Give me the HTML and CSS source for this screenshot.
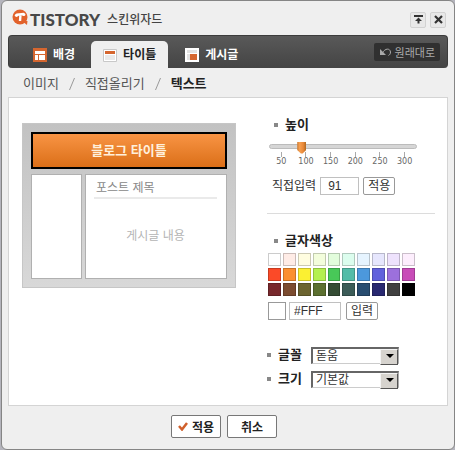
FILE: index.html
```html
<!DOCTYPE html>
<html lang="ko">
<head>
  <meta charset="UTF-8">
  <meta name="viewport" content="width=device-width, initial-scale=1.0">
  <title>TISTORY 스킨위자드</title>
  <link rel="stylesheet" href="styles.css">
</head>
<body>

  <div class="wizard">
    <header class="wizard-header">
      <h1 class="logo">
        <svg class="logo-mark" width="17" height="17" viewBox="0 0 17 17">
          <circle cx="8" cy="8" r="7.500" fill="#e2622b"/>
          <path d="M10 12h5.500l-.5 4z" fill="#e2622b"/>
          <path d="M4.500 5.800L12 5M8.500 5.500L8 12" stroke="#fff" stroke-width="2.400" fill="none"/>
          <circle cx="4.500" cy="6.300" r="1.600" fill="#fff"/>
          <circle cx="11.800" cy="5.500" r="1.600" fill="#fff"/>
        </svg>
        <span class="logo-name">TISTORY</span>
        <span class="logo-sub">스킨위자드</span>
      </h1>
      <div class="window-buttons">
        <button type="button" class="window-button" aria-label="접기">
          <svg width="9" height="9" viewBox="0 0 9 9"><path d="M0 1h9" stroke="#333" stroke-width="2"/><path d="M4.500 2.500L8 6H5.500v2.500h-2V6H1z" fill="#333"/></svg>
        </button>
        <button type="button" class="window-button" aria-label="닫기">
          <svg width="9" height="9" viewBox="0 0 9 9"><path d="M1 1l7 7M8 1L1 8" stroke="#333" stroke-width="2.200"/></svg>
        </button>
      </div>
    </header>

    <nav class="tabs">
      <a href="#background" class="tab">
        <svg width="14" height="14" viewBox="0 0 14 14"><path d="M0 0h14v14H0z" fill="#d5662f"/><path d="M2 3h10v3H2zM2 7h3v5H2zM6 7h6v5H6z" fill="#fff"/></svg>
        배경
      </a>
      <a href="#title" class="tab active">
        <svg width="14" height="14" viewBox="0 0 14 14"><path d="M.5 1.500h13v12H.5z" fill="#fff" stroke="#c8c8c8"/><path d="M2 3h10v3H2z" fill="#d5662f"/><path d="M2 7h10v5H2z" fill="#e9e9e9"/></svg>
        타이틀
      </a>
      <a href="#post" class="tab">
        <svg width="14" height="14" viewBox="0 0 14 14"><path d="M0 0h14v14H0z" fill="#fff"/><path d="M2 2h10v3H2zM2 6h3v6H2z" fill="#e2e2e2"/><path d="M5 6h7v6H5z" fill="#d5662f"/></svg>
        게시글
      </a>
      <button type="button" class="reset-button">
        <svg width="12" height="10" viewBox="0 0 12 10"><path d="M2.500 6C5 1 10 1 10.500 5c0 2-1 3-2 3.500" fill="none" stroke="#aaa"/><path d="M0 2v6h6z" fill="#aaa"/></svg>
        원래대로
      </button>
    </nav>

    <nav class="sub-menu">
      <a href="#image">이미지</a>
      <svg class="slash" width="6" height="12" viewBox="0 0 6 12"><path d="M5.500 0L.5 12" stroke="#999"/></svg>
      <a href="#upload">직접올리기</a>
      <svg class="slash" width="6" height="12" viewBox="0 0 6 12"><path d="M5.500 0L.5 12" stroke="#999"/></svg>
      <a href="#text" class="current">텍스트</a>
    </nav>

    <main class="panel">
      <section class="preview">
        <div class="preview-title">블로그 타이틀</div>
        <div class="preview-body">
          <div class="preview-side"></div>
          <div class="preview-post">
            <h2>포스트 제목</h2>
            <p>게시글 내용</p>
          </div>
        </div>
      </section>

      <form class="settings" id="textForm">
        <section class="height-setting">
          <h2 class="setting-name"><label for="heightRange">높이</label></h2>
          <div class="slider">
            <input type="range" id="heightRange" min="35" max="317" value="91">
            <ul class="ticks">
              <li>50</li>
              <li>100</li>
              <li>150</li>
              <li>200</li>
              <li>250</li>
              <li>300</li>
            </ul>
          </div>
          <div class="height-row">
            <label for="height">직접입력</label>
            <input type="text" id="height" class="text-box height-box" value="91">
            <button type="button" class="small-button">적용</button>
          </div>
        </section>

        <section class="color-setting">
          <h2 class="setting-name"><label for="color">글자색상</label></h2>
          <div class="palette" id="palette"></div>
          <div class="color-row">
            <span class="color-chip"></span>
            <input type="text" id="color" class="text-box color-box" value="#FFF">
            <button type="button" class="small-button">입력</button>
          </div>
        </section>

        <section class="font-setting">
          <div class="font-row">
            <label for="font" class="setting-name">글꼴</label>
            <div class="select-box">
              <select id="font">
                <option>돋움</option>
                <option>굴림</option>
              </select>
            </div>
          </div>
          <div class="font-row">
            <label for="size" class="setting-name">크기</label>
            <div class="select-box">
              <select id="size">
                <option>기본값</option>
                <option>크게</option>
              </select>
            </div>
          </div>
        </section>
      </form>
    </main>

    <footer class="wizard-footer">
      <button type="submit" form="textForm" class="main-button">
        <svg width="10" height="9" viewBox="0 0 10 9"><path d="M1 4l3 3.500L9 1" fill="none" stroke="#d0602c" stroke-width="2.500"/></svg>
        적용
      </button>
      <button type="button" class="main-button">취소</button>
    </footer>
  </div>

  <script>
    const colors = [
      "#ffffff", "#ffece6", "#fffde0", "#f3fddc", "#e2fddc", "#dcfdee", "#e6f4ff", "#e6e6fd", "#eee2fd", "#fdeefd",
      "#fb4a28", "#fb8f30", "#fbf032", "#b4f050", "#48c858", "#54bca8", "#4c98dc", "#6060dc", "#9c70dc", "#c84cb8",
      "#78282c", "#7c4c30", "#6c6430", "#5c7030", "#344c34", "#3c5c58", "#284c70", "#282870", "#404040", "#000000"
    ];
    const palette = document.getElementById("palette");
    const colorInput = document.getElementById("color");

    colors.forEach(function(color) {
      const button = document.createElement("button");
      button.type = "button";
      button.className = "swatch";
      button.style.backgroundColor = color;
      button.setAttribute("aria-label", color);
      button.addEventListener("click", function() {
        colorInput.value = color.toUpperCase();
        document.querySelector(".color-chip").style.backgroundColor = color;
      });
      palette.appendChild(button);
    });

    document.getElementById("heightRange").addEventListener("input", function() {
      document.getElementById("height").value = this.value;
    });

    document.getElementById("textForm").addEventListener("submit", function(event) {
      event.preventDefault();
    });
  </script>

</body>
</html>
```

FILE: styles.css
```css
/* General Styles */
* {
  margin: 0;
  padding: 0;
  box-sizing: border-box;
}

body {
  background-color: #b4b4bc;
  padding-left: 1px;
  font-family: "Liberation Sans", "Noto Sans CJK KR", sans-serif;
  font-size: 12px;
  line-height: 16px;
  color: #333;
}

button, input, select {
  font-family: inherit;
  font-size: 12px;
  color: #333;
}

a {
  color: inherit;
  text-decoration: none;
}

svg {
  flex: none;
}

.wizard {
  background-color: #efefef;
  border: 1px solid #858585;
  border-radius: 6px;
  padding: 0 6px 11px;
}

/* Header */
.wizard-header {
  display: flex;
  justify-content: space-between;
  align-items: center;
  height: 34px;
  padding: 3px 2px 0 4px;
}

.logo {
  display: flex;
  align-items: center;
}

.logo-mark {
  margin-bottom: 4px;
}

.logo-name {
  margin-left: 1px;
  font-family: Lato, sans-serif;
  font-size: 17px;
  font-weight: 900;
  color: #484848;
}

.logo-sub {
  margin-left: 7px;
  font-size: 12px;
  font-weight: 500;
  color: #444;
}

.window-buttons {
  display: flex;
  gap: 4px;
}

.window-button {
  display: flex;
  justify-content: center;
  align-items: center;
  width: 16px;
  height: 16px;
  background-color: #e8e8e8;
  border: 1px solid #d2d2d2;
  border-radius: 2px;
}

/* Tabs */
.tabs {
  display: flex;
  align-items: flex-end;
  height: 33px;
  padding: 0 7px 0 12px;
  background: linear-gradient(#595959, #444);
  border: 1px solid #3c3c3c;
  border-bottom: none;
  border-radius: 4px;
}

.tab {
  display: flex;
  align-items: center;
  gap: 6px;
  height: 27px;
  padding: 0 12px;
  font-weight: bold;
  color: #fff;
}

.tab.active {
  margin: 0 5px 0 4px;
  background-color: #efefef;
  border-radius: 5px 5px 0 0;
  color: #222;
}

.reset-button {
  display: flex;
  align-items: center;
  gap: 3px;
  height: 18px;
  margin-left: auto;
  margin-bottom: 7px;
  padding: 0 5px 0 6px;
  background-color: #303030;
  border: none;
  border-radius: 2px;
  font-size: 11px;
  color: #aaa;
}

.sub-menu {
  display: flex;
  align-items: center;
  gap: 10px;
  height: 29px;
  padding: 3px 15px 0;
  font-size: 13px;
  color: #555;
}

.current {
  font-weight: bold;
  color: #222;
}

/* Content */
.panel {
  display: flex;
  justify-content: space-between;
  align-items: flex-start;
  padding: 18px 12px 17px 13px;
  background-color: #fff;
  border: 1px solid #d4d4d4;
}

.preview {
  flex: 0 1 214px;
  margin-top: 7px;
  padding: 8px;
  background: linear-gradient(#c2c2c2, #d8d8d8);
  border: 1px solid #c6c6c6;
}

.preview-title {
  display: flex;
  justify-content: center;
  align-items: center;
  height: 37px;
  background: linear-gradient(#f89444, #db6f18);
  border: 2px solid #000;
  font-size: 13px;
  font-weight: bold;
  color: #fff0dc;
}

.preview-body {
  display: flex;
  gap: 3px;
  height: 105px;
  margin-top: 5px;
}

.preview-side,
.preview-post {
  background-color: #fff;
  border: 1px solid #b0b0b0;
}

.preview-side {
  flex: 0 0 51px;
}

.preview-post {
  flex: 1;
  padding: 5px 9px 0 8px;
}

.preview-post h2 {
  height: 19px;
  padding-left: 2px;
  border-bottom: 2px solid #eaeaea;
  font-size: 12px;
  font-weight: normal;
  color: #888;
}

.preview-post p {
  margin-top: 29px;
  text-align: center;
  color: #b4b4b4;
}

.settings {
  width: 168px;
}

.setting-name {
  display: flex;
  align-items: center;
  gap: 7px;
  padding-left: 7px;
  font-size: 13px;
  font-weight: bold;
  line-height: 18px;
  color: #222;
}

.setting-name::before {
  content: "";
  width: 4px;
  height: 4px;
  background-color: #888;
}

/* Height */
.height-setting {
  padding-bottom: 18px;
  border-bottom: 1px solid #dcdcdc;
}

.slider {
  width: 148px;
  margin-left: 2px;
  margin-top: 6px;
}

input[type="range"] {
  display: block;
  width: 100%;
  height: 12px;
  appearance: none;
  background: none;
}

input[type="range"]::-webkit-slider-runnable-track {
  height: 5px;
  background-color: #d6d6d6;
  border: 1px solid #bcbcbc;
  border-radius: 3px;
}

input[type="range"]::-webkit-slider-thumb {
  appearance: none;
  width: 9px;
  height: 12px;
  margin-top: -3px;
  background: linear-gradient(90deg, #c87830, #f8a050 30%, #e88838 70%, #b06820);
  clip-path: polygon(0 0, 100% 0, 100% 70%, 60% 100%, 40% 100%, 0 70%);
}

.ticks {
  display: grid;
  grid-template-columns: repeat(6, 1fr);
  list-style: none;
  font-family: "DejaVu Sans", sans-serif;
  font-size: 8px;
  line-height: 10px;
  text-align: center;
  color: #666;
}

.ticks li::before {
  content: "";
  display: block;
  width: 1px;
  height: 5px;
  margin: 0 auto;
  background-color: #aaa;
}

.height-row {
  display: flex;
  align-items: center;
  gap: 4px;
  margin-top: 10px;
  padding-left: 5px;
}

.text-box {
  height: 18px;
  background-color: #fff;
  border: 1px solid #c0c0c0;
  outline: none;
}

.height-box {
  width: 39px;
  padding-left: 7px;
}

.small-button {
  width: 32px;
  height: 18px;
  background-color: #fff;
  border: 1px solid #999;
  border-radius: 2px;
  line-height: 16px;
}

/* Color */
.color-setting {
  padding-top: 18px;
}

.palette {
  display: grid;
  grid-template-columns: repeat(10, 1fr);
  gap: 2px;
  width: 147px;
  margin-left: 1px;
  margin-top: 3px;
}

.swatch {
  height: 13px;
  border: 1px solid rgba(0, 0, 0, 0.2);
}

.color-row {
  display: flex;
  gap: 3px;
  margin-top: 6px;
  margin-left: 1px;
}

.color-chip {
  width: 18px;
  height: 18px;
  background-color: #fff;
  border: 1px solid #999;
}

.color-box {
  width: 52px;
  margin-right: 2px;
  padding-left: 4px;
}

/* Font */
.font-setting {
  display: grid;
  gap: 6px;
  margin-top: 26px;
}

.font-row {
  display: flex;
  align-items: center;
  gap: 9px;
}

.font-row .setting-name {
  padding-left: 0;
}

.select-box {
  position: relative;
  width: 88px;
}

.select-box select {
  display: block;
  width: 100%;
  height: 17px;
  padding-left: 3px;
  appearance: none;
  background-color: #fff;
  border: 2px solid #666;
  border-right: 1px solid #aaa;
  border-bottom: 1px solid #ccc;
  border-radius: 0;
  line-height: 14px;
}

.select-box::before {
  content: "";
  position: absolute;
  top: 2px;
  right: 1px;
  width: 16px;
  height: 14px;
  background-color: #d6d3ce;
  border: 1px solid #f4f4f4;
  border-right-color: #555;
  border-bottom-color: #555;
  pointer-events: none;
}

.select-box::after {
  content: "";
  position: absolute;
  top: 7px;
  right: 5px;
  border: 4px solid transparent;
  border-top-color: #000;
  border-bottom: none;
  pointer-events: none;
}

/* Footer */
.wizard-footer {
  display: flex;
  justify-content: center;
  gap: 6px;
  padding: 9px 8px 0 0;
}

.main-button {
  display: flex;
  justify-content: center;
  align-items: center;
  gap: 4px;
  width: 50px;
  height: 23px;
  background-color: #fff;
  border: 1px solid #777;
  border-radius: 2px;
  font-weight: bold;
  color: #222;
}
```
